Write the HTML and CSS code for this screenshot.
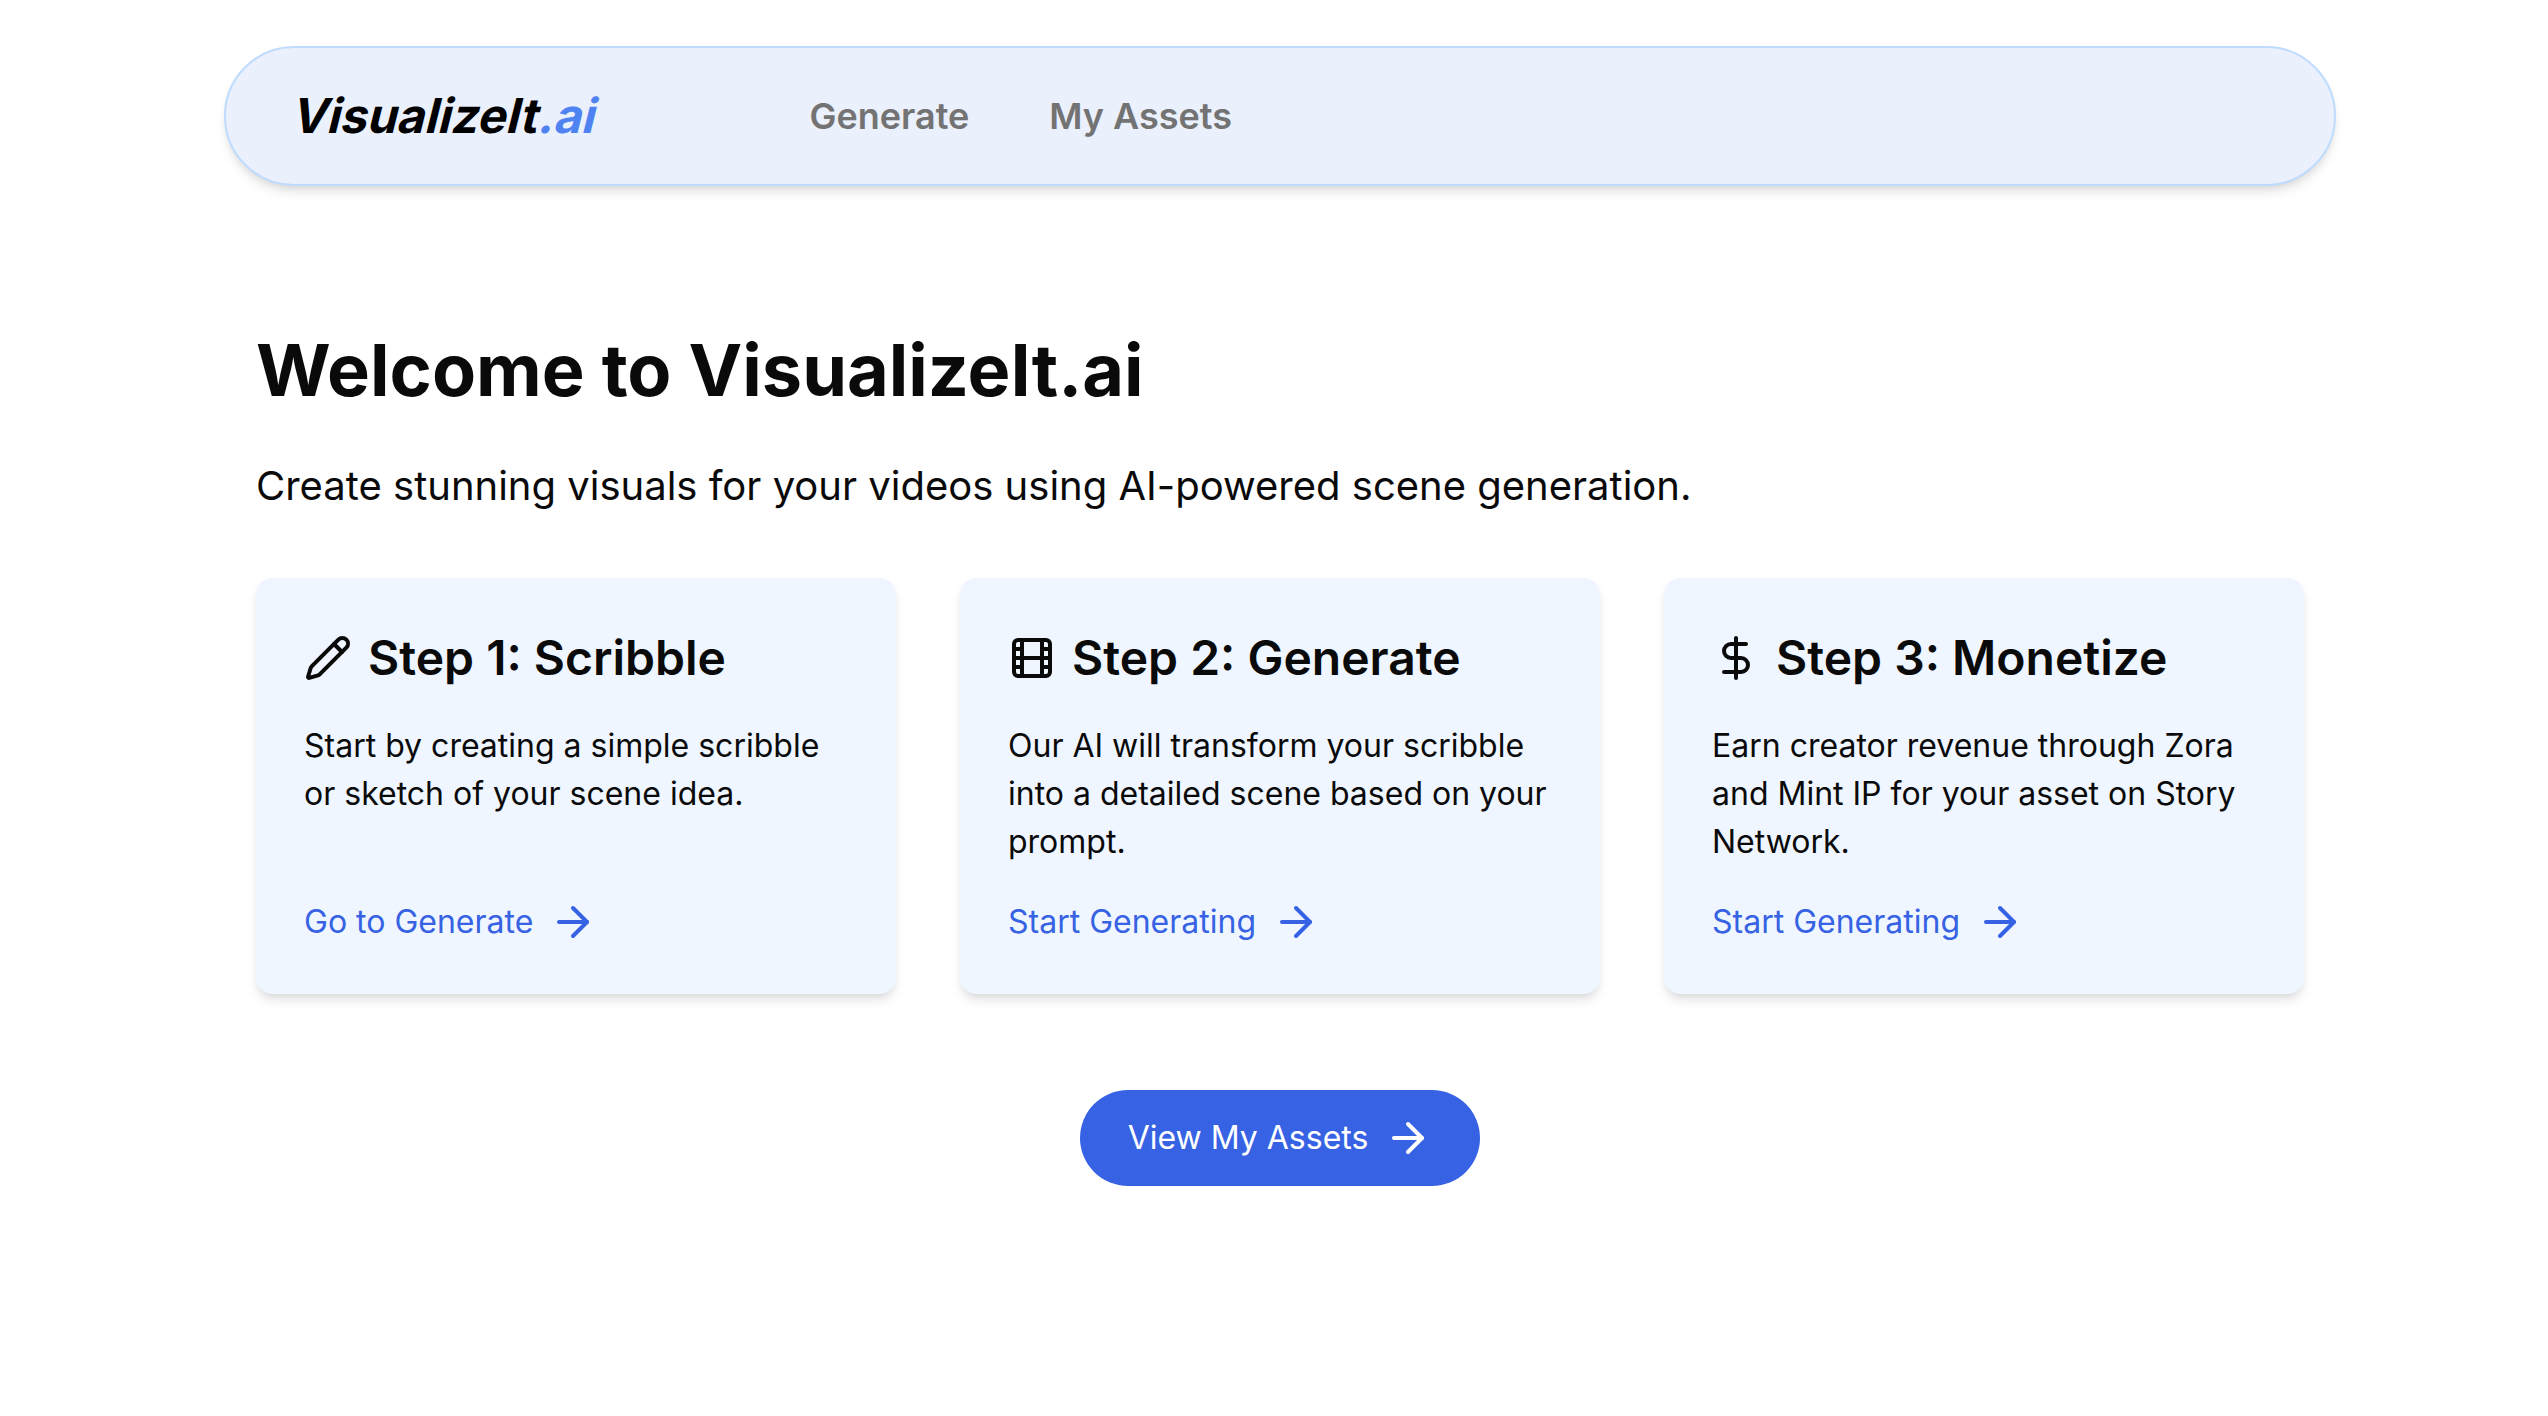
FILE: index.html
```html
<!DOCTYPE html>
<html lang="en">
<head>
<meta charset="utf-8">
<title>VisualizeIt.ai</title>
<link rel="stylesheet" href="styles.css">
</head>
<body>
<header class="navbar">
  <a class="logo">VisualizeIt<span class="logo-suffix">.ai</span></a>
  <nav class="nav-links">
    <a class="nav-link">Generate</a>
    <a class="nav-link">My Assets</a>
  </nav>
</header>
<main class="content">
  <h1 class="title">Welcome to VisualizeIt.ai</h1>
  <p class="lead">Create stunning visuals for your videos using AI-powered scene generation.</p>
  <section class="cards">
    <article class="card">
      <h2 class="card-title">
        <svg class="icon" viewBox="0 0 24 24"><path d="M21.174 6.812a1 1 0 0 0-3.986-3.987L3.842 16.174a2 2 0 0 0-.5.83l-1.321 4.352a.5.5 0 0 0 .623.622l4.353-1.32a2 2 0 0 0 .83-.497z"/><path d="m15 5 4 4"/></svg>
        Step 1: Scribble
      </h2>
      <p class="card-text">Start by creating a simple scribble or sketch of your scene idea.</p>
      <a class="card-link">Go to Generate <svg class="icon" viewBox="0 0 24 24"><path d="M5 12h14"/><path d="m12 5 7 7-7 7"/></svg></a>
    </article>
    <article class="card">
      <h2 class="card-title">
        <svg class="icon" viewBox="0 0 24 24"><rect width="18" height="18" x="3" y="3" rx="2"/><path d="M7 3v18M3 7.5h4M3 12h18M3 16.5h4M17 3v18M17 7.5h4M17 16.5h4"/></svg>
        Step 2: Generate
      </h2>
      <p class="card-text">Our AI will transform your scribble into a detailed scene based on your prompt.</p>
      <a class="card-link">Start Generating <svg class="icon" viewBox="0 0 24 24"><path d="M5 12h14"/><path d="m12 5 7 7-7 7"/></svg></a>
    </article>
    <article class="card">
      <h2 class="card-title">
        <svg class="icon" viewBox="0 0 24 24"><path d="M12 2v20"/><path d="M17 5H9.5a3.5 3.5 0 0 0 0 7h5a3.5 3.5 0 0 1 0 7H6"/></svg>
        Step 3: Monetize
      </h2>
      <p class="card-text">Earn creator revenue through Zora and Mint IP for your asset on Story Network.</p>
      <a class="card-link">Start Generating <svg class="icon" viewBox="0 0 24 24"><path d="M5 12h14"/><path d="m12 5 7 7-7 7"/></svg></a>
    </article>
  </section>
  <a class="button">View My Assets <svg class="icon" viewBox="0 0 24 24"><path d="M5 12h14"/><path d="m12 5 7 7-7 7"/></svg></a>
</main>
</body>
</html>
```
FILE: styles.css
```css
* { box-sizing: border-box; margin: 0; }

body {
  min-height: 100vh;
  padding: 46px 212px 0 224px;
  background: #fff;
  color: #0a0a0a;
  font-family: Inter, "Liberation Sans", sans-serif;
  font-size: 32px;
  line-height: 48px;
  font-optical-sizing: none;
}

.navbar {
  display: flex;
  align-items: center;
  height: 140px;
  padding: 0 64px;
  border: 2px solid #bfdbfe;
  border-radius: 70px;
  background: #eaf0fc;
  box-shadow: 0 8px 12px -2px rgb(0 0 0 / .1), 0 4px 8px -4px rgb(0 0 0 / .1);
}

/* The wordmark is the upright bold, slanted about its baseline. */
.logo {
  width: 519.5px;
  color: #000;
  font-size: 48px;
  font-weight: 700;
  transform: skewX(-14deg);
  transform-origin: 0 41px;
}

.logo-suffix { color: #4f83f1; }

.nav-links { display: flex; gap: 80px; }

.nav-link {
  color: #737373;
  font-size: 36px;
  font-weight: 600;
}

.content {
  display: flex;
  flex-direction: column;
  padding: 144px 32px 0;
}

.title {
  margin-bottom: 48px;
  font-size: 72px;
  font-weight: 700;
  line-height: 80px;
}

.lead {
  margin-bottom: 64px;
  font-size: 40px;
  line-height: 56px;
}

.cards {
  display: grid;
  grid-template-columns: repeat(3, 1fr);
  gap: 64px;
  margin-bottom: 96px;
}

.card {
  display: flex;
  flex-direction: column;
  padding: 48px;
  border-radius: 16px;
  background: #eff6ff;
  box-shadow: 0 8px 12px -2px rgb(0 0 0 / .1), 0 4px 8px -4px rgb(0 0 0 / .1);
}

.card-title {
  display: flex;
  align-items: center;
  gap: 16px;
  margin-bottom: 32px;
  font-size: 48px;
  font-weight: 600;
  line-height: 64px;
}

.card-text {
  flex: 1;
  margin-bottom: 32px;
}

.card-link {
  display: flex;
  align-items: center;
  gap: 16px;
  color: #3662e3;
}

.icon {
  flex: none;
  width: 48px;
  height: 48px;
  fill: none;
  stroke: currentColor;
  stroke-width: 2;
  stroke-linecap: round;
  stroke-linejoin: round;
}

.button {
  display: flex;
  align-items: center;
  align-self: center;
  gap: 16px;
  padding: 24px 48px;
  border-radius: 48px;
  background: #3662e3;
  color: #fff;
}
```
